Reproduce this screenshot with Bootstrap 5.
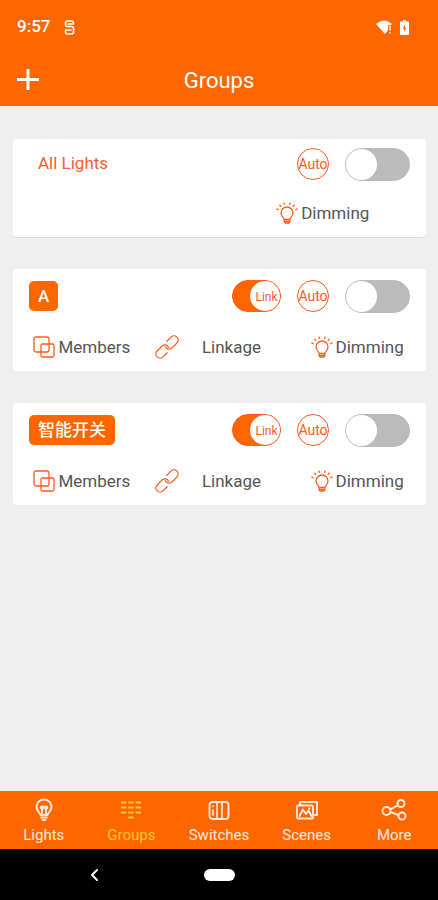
<!DOCTYPE html>
<html lang="en">
<head>
<meta charset="utf-8">
<meta name="viewport" content="width=device-width, initial-scale=1">
<title>Groups</title>
<link rel="stylesheet" href="https://cdn.jsdelivr.net/npm/bootstrap@5.3.0/dist/css/bootstrap.min.css">
<style>
:root { --brand: #ff6600; --accent: #ff5a1f; }
body { font-family: Roboto, "Noto Sans CJK SC", sans-serif; background: #efefef; color: #555; }
svg { display: block; flex: none; fill: none; stroke: currentColor; stroke-linecap: round; stroke-linejoin: round; }
button { color: inherit; font-family: inherit; }
.bg-brand { background: var(--brand); }
.status-bar { height: 54px; padding: 0 29px 0 17px; font-size: 17px; font-weight: 500; }
.status-icon { margin-left: 14px; }
.title-bar { height: 52px; padding: 0 17px; }
.title-bar h1 { font-size: 22px; font-weight: 400; line-height: 28px; padding-top: 2px; }
.side-slot { width: 24px; }
.page { padding: 33px 12px 32px 13px; gap: 32px; }
.group-card { border: 0; border-radius: 4px; }
.group-card.flat { box-shadow: 0 1px 0 #dcdcdc; }
.top-line { height: 54px; padding: 0 16px; gap: 16px; }
.flat .top-line { height: 50px; }
.bottom-line { height: 48px; }
.all-name { color: #f4602c; font-size: 17px; padding: 0 9px; }
.tag-btn { background: var(--brand); border-radius: 5px; height: 30px; padding: 0 9px; font-size: 17px; font-weight: 500; line-height: 30px; }
.auto-btn { width: 32px; height: 32px; border: 1px solid var(--accent); border-radius: 50%; background: none; color: var(--accent); font-size: 14px; line-height: 31px; }
.slide { appearance: none; display: block; margin: 0; width: 65px; height: 33px; border-radius: 17px; border: 1px solid #b9b9b9; background: #bbb; }
.slide::before { content: ""; display: block; width: 31px; height: 31px; border-radius: 50%; background: #fff; }
.slide:checked { background: var(--brand); border-color: var(--accent); }
.slide:checked::before { margin-left: auto; }
.slide.short { width: 49px; height: 32px; }
.slide.short::before { width: 30px; height: 30px; }
.knob-text { right: 0; width: 29px; line-height: 34px; font-size: 12px; color: var(--accent); text-align: center; pointer-events: none; }
.act { font-size: 17px; line-height: 24px; gap: 3px; color: #555; }
.act svg { color: var(--accent); stroke-width: 1.3; }
.act.wide { gap: 23px; padding-right: 23px !important; }
.tabs { height: 58px; }
.tabs a { color: #ffe9dc; font-size: 15px; line-height: 20px; padding-top: 7px; gap: 3px; }
.tabs a.active { color: #ffc826; }
.tabs svg { stroke-width: 1.9; }
.sys-bar { height: 51px; background: #000; color: #fff; }
.back-btn { height: 40px; }
.back-btn svg { margin-right: 14px; }
.home-pill { width: 31px; height: 12px; border-radius: 6px; background: #fff; }
</style>
<script src="https://cdn.jsdelivr.net/npm/bootstrap@5.3.0/dist/js/bootstrap.bundle.min.js"></script>
</head>
<body class="d-flex flex-column min-vh-100">

<svg class="d-none" aria-hidden="true">
  <symbol id="i-members" viewBox="0 0 22 22">
    <rect x="1" y="1" width="15" height="15" rx="2"/><rect x="8" y="8" width="13" height="13" rx="1.500"/>
  </symbol>
  <symbol id="i-link" viewBox="0 0 24 24">
    <g transform="rotate(-45 12 12)"><path d="M8 16.200H2.200a4.200 4.200 0 0 1 0-8.400H9a4.200 4.200 0 0 1 4 5.500M16 7.800h5.800a4.200 4.200 0 0 1 0 8.400H15a4.200 4.200 0 0 1-4-5.500"/></g>
  </symbol>
  <symbol id="i-dim" viewBox="0 0 22 22">
    <path d="M8.200 17.500c0-1.600-3.200-2.800-3.200-6.500a6 6 0 0 1 12 0c0 3.700-3.200 4.900-3.200 6.500zM8.200 17.500V20l1 1h3.600l1-1v-2.500M8.200 19.300h5.600M.8 7l1.400.7M3.800 3.200l1 1M8 1l.4 1.300M14 1l-.4 1.300M18.200 3.200l-1 1M21.200 7l-1.400.7"/>
  </symbol>
</svg>

<header class="bg-brand text-white">
  <div class="status-bar d-flex align-items-center">
    <span>9:57</span>
    <svg class="status-icon" width="11" height="15" viewBox="0 0 11 15" stroke-width="1.600"><path d="M9.500 4V3a2 2 0 0 0-2-2h-4a2 2 0 0 0-2 2v1.500a2 2 0 0 0 2 2h4a2 2 0 0 1 2 2V12a2 2 0 0 1-2 2h-4a2 2 0 0 1-2-2v-1.500M4 4h5.500M1.500 10H7"/></svg>
    <svg class="ms-auto" width="16" height="15" viewBox="0 0 16 15"><path fill="currentColor" stroke="none" d="M0 4Q8-3 16 4l-1 1h-3v5l-3 4z"/><path d="M14 6v4M14 12.500v.5" stroke-width="1.400"/></svg>
    <svg class="ms-2" width="9" height="15" viewBox="0 0 9 15"><path fill="currentColor" fill-rule="evenodd" stroke="none" d="M3 0h3v1.500h2a1 1 0 0 1 1 1V14a1 1 0 0 1-1 1H1a1 1 0 0 1-1-1V2.500a1 1 0 0 1 1-1h2zM5 4.500 2.800 8.700h1.400V12l2.200-4.300H5z"/></svg>
  </div>
  <div class="title-bar d-flex align-items-center justify-content-between">
    <button type="button" class="side-slot border-0 bg-transparent p-0" aria-label="Add group">
      <svg width="22" height="22" viewBox="0 0 22 22" stroke-width="3"><path stroke-linecap="butt" d="M11 0v21M0 10.500h22"/></svg>
    </button>
    <h1 class="mb-0">Groups</h1>
    <span class="side-slot"></span>
  </div>
</header>

<main class="page d-flex flex-column flex-grow-1">
  <section class="card group-card flat">
    <div class="top-line d-flex align-items-center">
      <span class="all-name me-auto">All Lights</span>
      <button type="button" class="auto-btn d-flex justify-content-center p-0">Auto</button>
      <input type="checkbox" class="slide" aria-label="All Lights power">
    </div>
    <div class="bottom-line row g-0 align-items-center">
      <div class="col-6 offset-6"><button type="button" class="act btn border-0 p-0 w-100 d-flex align-items-center justify-content-center"><svg width="22" height="22"><use href="#i-dim"/></svg>Dimming</button></div>
    </div>
  </section>

  <section class="card group-card">
    <div class="top-line d-flex align-items-center">
      <button type="button" class="tag-btn border-0 text-white me-auto">A</button>
      <label class="position-relative d-block"><input type="checkbox" class="slide short" checked><span class="knob-text position-absolute top-0">Link</span></label>
      <button type="button" class="auto-btn d-flex justify-content-center p-0">Auto</button>
      <input type="checkbox" class="slide" aria-label="A power">
    </div>
    <div class="bottom-line row g-0 align-items-center">
      <div class="col-4"><button type="button" class="act btn border-0 p-0 w-100 d-flex align-items-center justify-content-center"><svg width="22" height="22"><use href="#i-members"/></svg>Members</button></div>
      <div class="col-4"><button type="button" class="act wide btn border-0 p-0 w-100 d-flex align-items-center justify-content-center"><svg width="24" height="24"><use href="#i-link"/></svg>Linkage</button></div>
      <div class="col-4"><button type="button" class="act btn border-0 p-0 w-100 d-flex align-items-center justify-content-center"><svg width="22" height="22"><use href="#i-dim"/></svg>Dimming</button></div>
    </div>
  </section>

  <section class="card group-card">
    <div class="top-line d-flex align-items-center">
      <button type="button" class="tag-btn border-0 text-white me-auto" lang="zh-CN">智能开关</button>
      <label class="position-relative d-block"><input type="checkbox" class="slide short" checked><span class="knob-text position-absolute top-0">Link</span></label>
      <button type="button" class="auto-btn d-flex justify-content-center p-0">Auto</button>
      <input type="checkbox" class="slide" aria-label="智能开关 power">
    </div>
    <div class="bottom-line row g-0 align-items-center">
      <div class="col-4"><button type="button" class="act btn border-0 p-0 w-100 d-flex align-items-center justify-content-center"><svg width="22" height="22"><use href="#i-members"/></svg>Members</button></div>
      <div class="col-4"><button type="button" class="act wide btn border-0 p-0 w-100 d-flex align-items-center justify-content-center"><svg width="24" height="24"><use href="#i-link"/></svg>Linkage</button></div>
      <div class="col-4"><button type="button" class="act btn border-0 p-0 w-100 d-flex align-items-center justify-content-center"><svg width="22" height="22"><use href="#i-dim"/></svg>Dimming</button></div>
    </div>
  </section>
</main>

<footer class="sticky-bottom">
  <nav class="tabs bg-brand row g-0">
    <a href="#lights" class="col d-flex flex-column align-items-center text-decoration-none">
      <svg width="24" height="24" viewBox="0 0 24 24"><path d="M8.500 17c0-2-4-3.500-4-8a7.500 7.500 0 0 1 15 0c0 4.500-4 6-4 8zM9 19.500h6M10.500 22h3M10 16V10.500M14 16v-5.500M8.500 10c0-2 3.500-2 3.500.5 0-2.500 3.500-2.500 3.500-.5"/></svg>Lights</a>
    <a href="#groups" class="col d-flex flex-column align-items-center text-decoration-none active" aria-current="page">
      <svg width="24" height="24" viewBox="0 0 24 24"><path stroke-linecap="butt" stroke-width="2.200" d="M2 4.500h5.500M9.200 4.500h5.500M16.500 4.500H22M2 9.500h5.500M9.200 9.500h5.500M16.500 9.500H22M2 14.500h5.500M9.200 14.500h5.500M16.500 14.500H22M9.200 19.500h5.500"/></svg>Groups</a>
    <a href="#switches" class="col d-flex flex-column align-items-center text-decoration-none">
      <svg width="24" height="24" viewBox="0 0 24 24"><rect x="2.500" y="4" width="19" height="17" rx="3"/><path stroke-width="1.700" d="M10 4.500v16M15 4.500v16M6 8v.5M6 12v5"/></svg>Switches</a>
    <a href="#scenes" class="col d-flex flex-column align-items-center text-decoration-none">
      <svg width="24" height="24" viewBox="0 0 24 24"><rect x="2" y="7.500" width="16" height="13" rx="1"/><path d="M5 7V4h17v13h-3.500M4.500 18l3.500-6.500 3 4.500 2.500-3.500 3 5.500M14 10.500h.5"/></svg>Scenes</a>
    <a href="#more" class="col d-flex flex-column align-items-center text-decoration-none">
      <svg width="26" height="24" viewBox="0 0 26 24"><circle cx="5.500" cy="13" r="4"/><circle cx="20" cy="5.500" r="3.500"/><circle cx="21" cy="18" r="3.500"/><path d="M9.200 11.300 16.800 7.300M9.400 14l8.200 3"/></svg>More</a>
  </nav>
  <div class="sys-bar row g-0 align-items-center">
    <button type="button" class="back-btn col border-0 bg-transparent p-0 d-flex align-items-center justify-content-center" aria-label="Back"><svg width="7" height="12" viewBox="0 0 7 12" stroke-width="2"><path d="M6 1 1 6l5 5"/></svg></button>
    <button type="button" class="home-pill col-auto border-0 p-0" aria-label="Home"></button>
    <span class="col"></span>
  </div>
</footer>
</body>
</html>
